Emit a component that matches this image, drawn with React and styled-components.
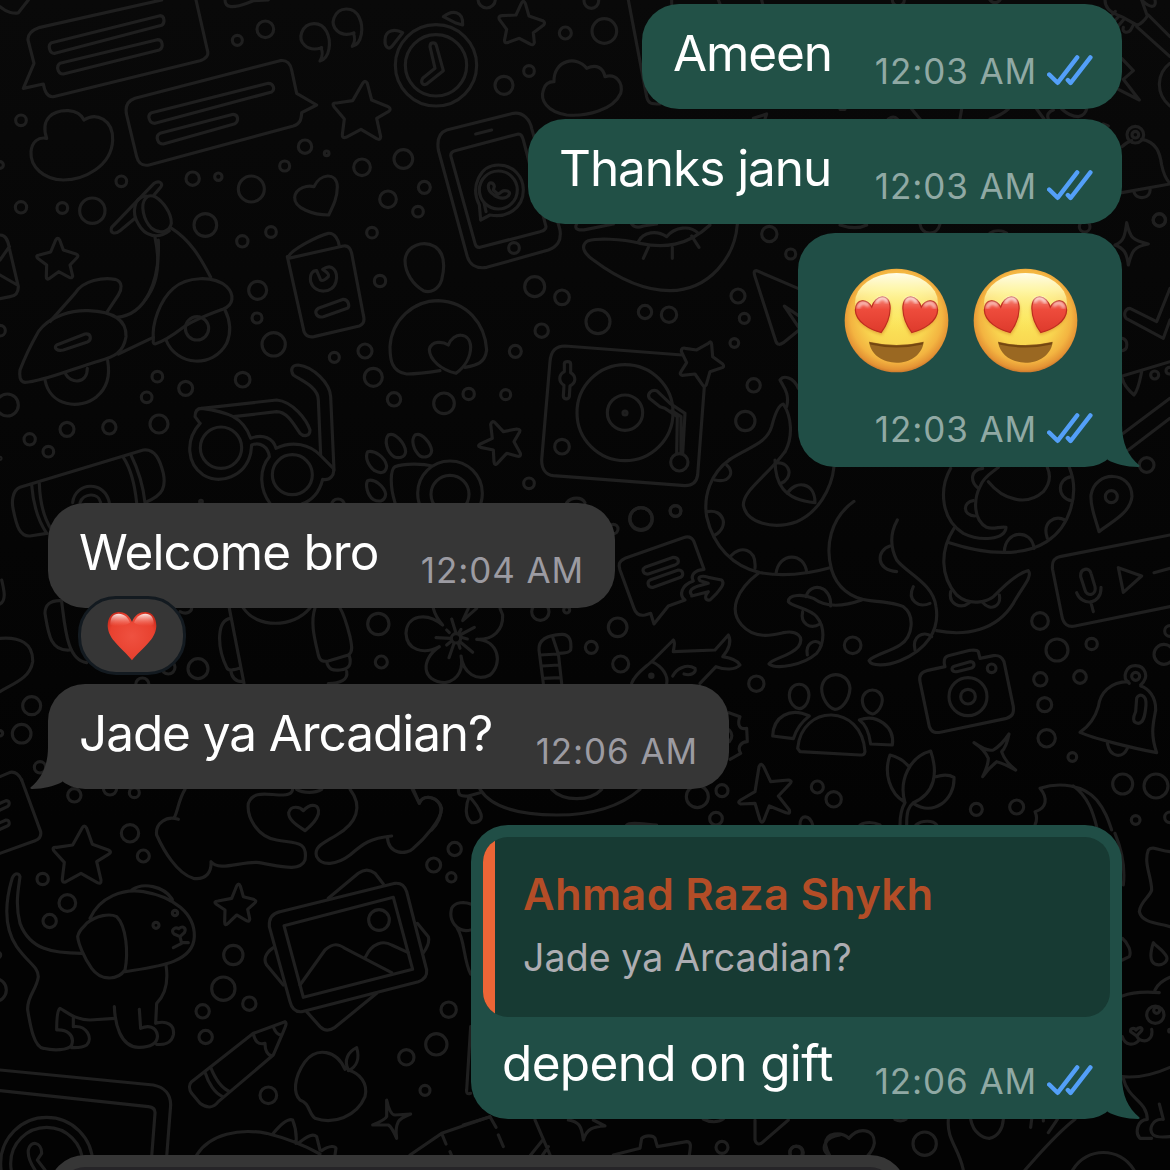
import React from "react";
import styled, { createGlobalStyle } from "styled-components";

const GlobalStyle = createGlobalStyle`
  html, body { margin: 0; padding: 0; background: #050505; }
  * { box-sizing: border-box; }
`;

/* ---------- layout ---------- */

const Screen = styled.main`
  position: relative;
  display: flex;
  flex-direction: column;
  width: 1170px;
  height: 1170px;
  padding: 4px 48px 0;
  overflow: hidden;
  background: linear-gradient(#090909, #030303 70%);
  font-family: Inter, "Liberation Sans", sans-serif;
  color: #fff;
`;

const Doodles = styled.svg`
  position: absolute;
  inset: 0;
  width: 1170px;
  height: 1170px;
  fill: none;
  stroke: #1f1f1f;
  stroke-width: 9.5;
  stroke-linecap: round;
  stroke-linejoin: round;
`;

const Bubble = styled.article`
  position: relative;
  flex: none;
  display: flex;
  flex-direction: column;
  align-self: ${(p) => (p.$mine ? "flex-end" : "flex-start")};
  width: ${(p) => p.$width}px;
  height: ${(p) => p.$height || 105}px;
  margin-top: ${(p) => p.$gap || 0}px;
  border-radius: 37px;
  background: ${(p) => (p.$mine ? p.$tone || "#204e46" : "#363636")};
`;

const Line = styled.div`
  flex: 1;
  display: flex;
  justify-content: space-between;
  padding: ${(p) => p.$top || 19}px 29px 18px 31px;
`;

const Text = styled.p`
  margin: 0;
  font-size: 49.5px;
  line-height: 60px;
  letter-spacing: ${(p) => p.$track || -1}px;
  white-space: nowrap;
`;

const Meta = styled.div`
  display: flex;
  align-items: center;
  align-self: flex-end;
  height: 40px;
  gap: 10px;
  margin-left: auto;
`;

const Time = styled.time`
  font-size: 35px;
  line-height: 40px;
  letter-spacing: 0.9px;
  margin-right: ${(p) => (p.$mine ? 0 : 2)}px;
  white-space: nowrap;
  color: ${(p) => (p.$mine ? "#90a9a4" : "#9c9ba2")};
`;

const Ticks = styled.svg`
  width: 46px;
  height: 31px;
  margin-bottom: 2px;
  fill: none;
  stroke: #539ff8;
  stroke-width: 4.4;
  stroke-linecap: round;
  stroke-linejoin: round;
`;

const TailShape = styled.svg`
  position: absolute;
  bottom: 0;
  ${(p) => (p.$mine ? "right: -18px;" : "left: -18px; transform: scaleX(-1);")}
  width: 54px;
  height: 42px;
  fill: ${(p) => (p.$mine ? "#204e46" : "#363636")};
`;

const EmojiRow = styled.div`
  display: flex;
  gap: 24px;
  padding: 35px 0 0 46px;
`;

const Emoji = styled.svg`
  width: 105px;
  height: 105px;
`;

const Reaction = styled.div`
  position: absolute;
  left: 30px;
  top: 93px;
  display: flex;
  align-items: center;
  justify-content: center;
  width: 108px;
  height: 79px;
  padding-right: 1px;
  border: 3px solid #131a20;
  border-radius: 38px;
  background: #363636;
`;

const HeartIcon = styled.svg`
  width: 50px;
  height: 50px;
`;

const Quote = styled.blockquote`
  flex: none;
  display: flex;
  height: ${(p) => p.$height || 180}px;
  margin: 12px 12px 0;
  border-radius: 25px;
  overflow: hidden;
  background: ${(p) => p.$tone || "#173a33"};
`;

const QuoteBar = styled.span`
  width: 12px;
  background: #ec6536;
`;

const QuoteBody = styled.div`
  padding: 31px 0 0 28px;
  white-space: nowrap;
`;

const QuoteName = styled.div`
  font-size: 43.5px;
  font-weight: 600;
  line-height: 52px;
  letter-spacing: 0.3px;
  color: #b34d27;
`;

const QuoteText = styled.div`
  margin-top: 13px;
  font-size: 37.5px;
  line-height: 50px;
  letter-spacing: 0.1px;
  color: #adadb2;
`;

/* ---------- small drawings ---------- */

const Tail = ({ mine }) => (
  <TailShape $mine={mine} viewBox="0 0 54 42">
    <path d="M36 0C36 18 42 31 53.5 40.5Q54 42 52 42C40 41.8 30 39.5 21.5 34.8V0Z" />
  </TailShape>
);

const Stamp = ({ mine, children }) => (
  <Meta>
    <Time $mine={mine}>{children}</Time>
    {mine && (
      <Ticks viewBox="0 0 46 31">
        <path d="M2.2 19.5L10.6 27.8L30.2 2.4M20.8 25L23.6 28L43.4 2.4" />
      </Ticks>
    )}
  </Meta>
);

const EYE =
  "M276 262C285 226 331 215 331 266C330 296 318 320 304 338C270 329 228 306 227 271C229 235 262 236 276 262Z";

const HeartEyes = ({ id }) => (
  <Emoji viewBox="193 145 314 314">
    <defs>
      <radialGradient id={id + "f"} cx="0.5" cy="0.46" r="0.54">
        <stop offset="0" stopColor="#fbe75c" />
        <stop offset="0.55" stopColor="#f9d650" />
        <stop offset="0.82" stopColor="#f3b441" />
        <stop offset="0.95" stopColor="#e49334" />
        <stop offset="1" stopColor="#cd7a2d" />
      </radialGradient>
      <linearGradient id={id + "t"} x1="0" y1="0" x2="0" y2="1">
        <stop offset="0" stopColor="#fffde9" />
        <stop offset="0.3" stopColor="#fffbb4" stopOpacity="0.85" />
        <stop offset="1" stopColor="#fdea64" stopOpacity="0" />
      </linearGradient>
      <linearGradient id={id + "e"} x1="0" y1="0" x2="0" y2="1">
        <stop offset="0" stopColor="#f58a7c" />
        <stop offset="0.35" stopColor="#ee4c3c" />
        <stop offset="1" stopColor="#de3a2c" />
      </linearGradient>
      <filter id={id + "b"} x="-40%" y="-40%" width="180%" height="180%">
        <feGaussianBlur stdDeviation="5" />
      </filter>
    </defs>
    <circle cx="350" cy="302" r="155" fill={`url(#${id}f)`} />
    <ellipse cx="350" cy="248" rx="124" ry="88" fill={`url(#${id}t)`} />
    {[undefined, "translate(700 0) scale(-1 1)"].map((t, i) => (
      <g key={i} transform={t}>
        <path d={EYE} transform="translate(2 7)" fill="#c9691e" opacity="0.45" filter={`url(#${id}b)`} />
        <path d={EYE} fill={`url(#${id}e)`} stroke="#bd2d1f" strokeWidth="3.5" />
        <path d="M236 262C240 248 256 246 264 256" stroke="#fff" strokeWidth="9" fill="none" strokeLinecap="round" opacity="0.65" filter={`url(#${id}b)`} />
        <path d="M291 247C298 232 316 230 321 244" stroke="#fff" strokeWidth="10" fill="none" strokeLinecap="round" opacity="0.75" filter={`url(#${id}b)`} />
      </g>
    ))}
    <path d="M268 368C266 364 270 365 276 367Q350 384 424 367C430 365 432 364 431 369C424 406 390 428 350 428C310 428 275 406 268 368Z" fill="#9a6822" />
    <path d="M269 367Q350 386 430 367L428 374Q350 392 271 374Z" fill="#673c0c" opacity="0.75" />
  </Emoji>
);

const RedHeart = () => (
  <HeartIcon viewBox="319 93 150 150">
    <defs>
      <radialGradient id="rh" cx="0.5" cy="0.5" r="0.6">
        <stop offset="0" stopColor="#ef5140" />
        <stop offset="0.75" stopColor="#e8412f" />
        <stop offset="1" stopColor="#c8291b" />
      </radialGradient>
      <linearGradient id="rg" x1="0" y1="0" x2="0" y2="1">
        <stop offset="0" stopColor="#fff" stopOpacity="0.9" />
        <stop offset="1" stopColor="#ff8a7a" stopOpacity="0" />
      </linearGradient>
    </defs>
    <path d="M394 126C386 103 368 95 352 96C332 98 321 114 321 138C323 180 362 200 394 241C427 200 465 180 467 138C467 114 456 98 436 96C420 95 402 103 394 126Z" fill="url(#rh)" />
    <path d="M329 134C328 112 338 101 354 101C370 101 382 112 388 128C372 138 345 142 329 134Z" fill="url(#rg)" />
    <path d="M459 134C460 112 450 101 434 101C418 101 406 112 400 128C416 138 443 142 459 134Z" fill="url(#rg)" />
  </HeartIcon>
);

/* ---------- wallpaper: outlines drawn on a 1/3 px grid, one patch per area ---------- */

const PATCHES = [
  {
    x: 0,
    y: 0,
    dots: [[63,361,16],[712,121,15],[796,88,25],[364,544,16],[63,622,17],[187,624,16],[277,632,38],[578,536,20],[655,530,11],[754,567,39],[616,675,34],[915,440,20],[980,460,7],[854,498,15],[1086,502,25],[1164,598,25],[1116,698,16],[813,696,16],[727,724,17],[0,495,10]],
    paths: [
      "M0 20C20 38 45 42 55 38L85 0",
      "M485 0L120 82C95 90 82 105 84 120L102 190L70 265L130 252C135 280 145 292 160 290L600 182C620 176 627 165 622 150L588 0",
      "M155 128L480 47C495 48 495 70 485 76L165 160C148 162 142 135 155 128Z",
      "M180 190L472 119C488 119 492 142 478 150L190 222C172 222 168 198 180 190Z",
      "M405 295L840 182C862 178 872 195 875 210L890 280L950 315L905 338C904 362 898 372 880 378L450 494C425 500 415 490 410 470L380 345C374 318 385 302 405 295Z",
      "M455 338L805 250C822 250 825 270 815 276L465 370C447 370 440 345 455 338Z",
      "M480 400L700 343C716 344 716 364 705 371L490 432C472 432 465 408 480 400Z",
      "M140 415C120 355 160 330 205 332C230 334 245 345 252 360C290 335 340 360 338 420C335 500 250 540 190 540C130 538 90 500 93 455C96 425 115 410 140 415Z",
      "M965 143C920 158 895 125 905 98C920 60 965 65 980 95C995 125 990 175 960 183C970 165 968 155 963 143",
      "M1062 99C1017 114 992 81 1002 54C1017 16 1062 21 1077 51C1092 81 1087 131 1057 139C1067 121 1065 111 1060 99",
      "M1088 250Q1095 238 1102 250L1115 300L1165 320Q1176 328 1165 335L1130 355L1142 410Q1142 422 1130 416L1083 388L1038 412Q1026 416 1027 403L1033 357L1002 320Q994 308 1010 309L1058 302Z",
      "M942 560C960 520 1010 515 1012 560C1012 595 998 620 986 645C940 645 882 625 884 592C887 562 925 555 942 560Z",
      "M167 720Q173 710 179 720L190 750L228 762Q238 766 230 774L210 795L218 828Q217 836 208 832L176 815L147 836Q139 840 139 830L140 795L113 775Q106 766 118 765L152 756Z",
      "M405 655L360 692C345 704 328 700 335 682L462 550C478 540 490 550 483 560L462 585",
      "M437 595C420 615 430 660 455 685C480 705 510 695 514 670C515 640 490 605 465 590C452 585 442 588 437 595Z",
      "M440 588C400 590 395 640 415 672C435 710 475 718 508 692",
      "M465 712C480 780 475 850 435 900M515 685C570 720 600 770 632 832",
      "M675 0C675 25 700 25 745 8L760 2L805 0",
      "M865 772C870 750 960 705 985 700C1005 698 1015 720 1018 738",
      "M0 705C20 705 25 725 28 745L55 860C55 880 45 888 30 890L0 896M28 740L0 780M0 825L52 855",
    ],
  },
  {
    x: 0,
    y: 240,
    dots: [[773,151,27],[771,234,15],[821,313,35],[1095,333,21],[1003,352,15],[1120,412,27],[1140,123,17],[472,410,16],[557,445,21],[440,472,16],[728,419,22],[22,495,33],[201,568,21],[89,598,17],[328,562,20],[145,635,16],[477,552,27],[0,272,16],[1182,478,20],[603,785,4],[1014,797,20],[591,265,35],[663,623,62],[877,704,60],[0,655,3]],
    paths: [
      "M862 50L912 275C918 290 930 292 942 290L1078 258C1092 253 1094 240 1090 225L1055 40C1050 18 1040 16 1030 18L865 55",
      "M968 88C998 68 1015 95 1008 125C1000 160 945 165 932 125C928 100 940 90 950 92L962 120Q968 126 985 110Q990 102 968 88Z",
      "M955 205L1030 178C1046 178 1050 200 1042 205L970 230C950 235 940 215 955 205Z",
      "M150 245L225 160C250 120 310 112 345 118C370 125 365 150 355 165L322 215",
      "M60 390C75 350 95 310 115 275C150 225 220 210 265 212C340 215 380 240 378 290C370 340 340 350 300 362C220 385 130 425 75 427C58 425 58 405 60 390Z",
      "M170 315L255 282C275 280 275 300 262 306L190 330C170 335 160 322 170 315Z",
      "M135 420C150 500 240 510 290 470C325 440 330 400 323 362M197 402C210 430 262 435 262 385",
      "M475 0C480 120 440 225 350 232",
      "M460 300C455 250 480 180 520 145C560 110 640 105 680 140C705 165 700 195 670 207C620 225 580 240 550 262C520 285 490 305 465 312Q458 312 460 300Z",
      "M498 300C530 380 640 385 680 310C695 275 690 240 675 210M355 342L460 292",
      "M605 505L830 480C880 485 920 540 930 570C930 590 910 590 900 580C880 550 860 515 830 515L700 530",
      "M600 550C555 600 560 670 610 705C660 735 735 710 752 640L755 615C780 605 805 620 808 650C775 690 780 750 810 790",
      "M600 550L585 530C585 510 595 505 605 505C680 515 730 530 752 595C790 580 820 595 828 625C880 600 930 615 960 645L1000 685C1005 705 990 722 968 718C960 750 940 780 905 792",
      "M962 645L955 480C955 440 900 420 880 405C870 390 875 375 895 375C940 380 990 430 992 470L1002 690",
      "M140 880L90 888C60 890 50 860 40 810C35 790 35 752 60 742L430 630C465 625 480 660 490 700C498 740 490 765 440 785",
      "M95 735C100 800 120 850 140 880M118 730C120 790 135 840 155 870M370 652C395 690 405 740 410 788M393 645C415 690 430 740 435 788",
      "M218 788C225 725 315 720 328 788M240 788C250 760 295 755 302 788",
    ],
  },
  {
    x: 380,
    y: 0,
    dots: [[168,196,122],[168,196,92],[320,-2,26],[634,3,22],[556,99,18],[673,93,37],[447,213,16],[372,256,27],[70,477,28],[133,562,18],[114,635,16],[1168,702,23],[402,744,16],[355,570,57]],
    paths: [
      "M15 120C15 90 45 85 68 98L35 140C25 150 14 140 15 120Z",
      "M190 50C215 30 250 30 248 75L225 68Z",
      "M150 140C150 125 168 125 170 140L190 212L140 252C125 258 122 245 128 235L165 205Z",
      "M424 10Q430 -2 436 10L447 48L488 62Q498 68 490 76L460 98L463 128Q460 138 450 132L418 115L382 128Q372 130 374 118L380 88L358 58Q354 48 366 47L408 45Z",
      "M522 245C520 180 590 165 620 205C650 190 670 205 675 230C710 220 730 250 722 280C700 330 620 350 560 345C500 335 480 300 490 270C495 250 508 245 522 245Z",
      "M200 390L400 340C430 335 450 360 455 385L540 690C545 725 530 740 505 750L320 802C285 808 268 790 262 770L175 450C170 415 180 397 200 390Z",
      "M225 452L415 402C425 402 427 410 430 420L498 680C498 690 490 692 480 695L300 742C290 744 287 738 285 730L213 470Q210 456 225 452Z",
      "M287 402L335 390",
      "M302 660L298 615C270 560 300 495 355 495C400 495 430 530 430 570C430 625 380 655 330 645ZM318 635L312 608",
      "M325 560C325 542 342 548 343 560L340 570L355 583L365 575C375 568 392 575 388 582C380 600 355 596 342 585C330 577 325 570 325 560Z",
      "M745 0L800 290C805 312 815 312 840 312M875 0V12M1015 0L1020 12M1145 0L1148 12",
      "M1120 355L1160 342L1155 357M590 672C580 690 600 692 620 688L700 672M755 672C765 685 780 682 790 678L830 672",
      "M775 725C790 695 830 690 860 710C885 680 930 675 955 700",
      "M780 730C850 745 920 740 990 675M805 742L790 775M877 742V775M935 708L957 742",
      "M780 730C720 715 650 715 625 722C600 735 610 760 640 780C720 840 800 872 870 872C990 870 1065 770 1072 672",
      "M75 780C80 735 130 720 165 740C195 760 195 800 185 840C175 870 150 880 130 872C100 855 75 820 75 780Z",
    ],
  },
  {
    x: 370,
    y: 230,
    dots: [[494,170,30],[576,202,22],[515,302,20],[684,275,36],[825,246,20],[897,254,23],[436,364,18],[222,520,31],[296,492,17],[407,494,15],[477,760,16],[813,866,33],[916,843,16],[1104,198,21],[1123,265,15],[1093,339,13],[1151,466,20],[1126,573,29],[1262,72,15],[765,548,144],[765,548,53],[765,549,6],[576,650,22],[928,697,26],[240,790,97],[240,793,57]],
    paths: [
      "M210 422C160 430 130 432 110 432C65 425 60 390 60 350C65 270 130 212 205 212C290 215 345 280 350 360C345 400 320 405 285 412",
      "M235 345C250 305 300 305 302 350C302 380 285 410 258 430C215 420 178 390 178 358C185 330 220 335 235 345Z",
      "M362 583Q367 568 377 580L400 605L440 597Q455 597 447 609L432 635L451 670Q454 682 440 678L410 670L382 700Q374 708 372 696L370 660L332 652Q320 648 331 642L367 625Z",
      "M937 375L585 348C555 348 542 365 540 395L515 690C515 720 530 735 550 737L945 767C970 767 980 755 983 735L1003 470",
      "M920 670L922 560L885 535L870 530L838 505C830 490 845 478 860 482L900 520L945 550L938 672M933 670L933 560L905 542",
      "M583 400C585 393 602 393 602 402L602 428C620 440 618 458 600 468L598 500C595 510 580 508 580 498L582 466C565 455 565 435 583 425Z",
      "M1015 340Q1024 330 1025 343L1028 380L1058 402Q1066 412 1053 414L1020 425L1009 464Q1003 474 997 464L975 432L937 436Q927 434 933 425L950 398L934 364Q934 352 946 355L980 360Z",
      "M75 818C60 770 60 720 75 710C100 700 160 700 185 708M590 818C605 800 635 800 645 818",
      "M1284 175L1160 122C1150 122 1152 130 1155 140L1218 335C1222 345 1230 345 1240 338L1290 298L1243 228L1290 260",
      "M1080 688C1140 650 1190 640 1205 590C1215 550 1225 525 1240 522C1265 560 1270 620 1245 665",
      "M1250 530C1260 490 1240 470 1230 450C1240 435 1270 440 1285 475",
      "M55 615C75 605 105 640 107 665C105 685 85 685 72 680C50 665 42 630 55 615Z",
      "M135 615C155 605 183 640 185 662C183 682 163 684 150 678C130 660 122 630 135 615Z",
      "M-7 665C13 660 45 680 50 708C48 730 32 732 14 722C-8 705 -15 680 -7 665Z",
      "M-7 752C13 745 42 768 47 792C45 815 27 817 9 808C-8 795 -15 765 -7 752Z",
    ],
  },
  {
    x: 700,
    y: 440,
    dots: [[1340,75,22],[1234,170,18],[1020,543,25],[1071,630,33],[1175,612,17],[1021,718,20],[1140,711,19],[1034,794,21],[1040,895,26],[1117,951,13],[1392,643,30],[1410,573,16],[1268,1032,30],[1368,1038,36],[1307,1140,13],[829,1108,18],[950,1101,21],[458,616,25],[169,731,23],[352,1041,18],[401,1078,23],[66,1052,18],[48,1136,19],[1410,1132,16],[875,685,13],[804,770,57],[804,770,22],[1307,709,12]],
    paths: [
      "M90 58C30 100 10 170 20 230C40 320 100 380 180 398C250 410 330 400 390 383",
      "M255 35C200 110 130 150 130 195C140 250 220 270 290 245C350 220 395 150 402 80",
      "M225 60C225 130 250 180 345 188M230 68C275 68 280 115 240 132M262 160C285 120 345 125 345 188M80 75C105 95 90 130 45 120M22 215C70 205 90 260 45 285M92 348C120 315 170 325 165 385M228 402C235 335 315 335 320 398",
      "M462 184C390 235 375 320 395 390C410 440 450 475 510 482C560 487 590 490 610 500C645 525 640 590 600 615C570 635 520 645 507 662C515 680 560 678 600 662C680 630 720 570 708 500C700 430 620 400 590 360C570 320 570 280 592 240",
      "M175 400C110 450 85 510 125 555C165 600 220 585 250 578C290 570 315 590 295 620C270 650 215 655 207 672C230 690 310 675 350 640C375 610 375 560 350 530C330 505 275 500 265 485C265 462 310 462 340 475C380 505 430 500 485 480",
      "M318 470C330 425 395 435 392 498M308 515C300 550 330 570 360 552M322 645C315 610 345 595 362 612M570 318C530 330 525 390 590 395M640 440C620 480 655 505 690 490M645 630C635 590 670 570 695 590",
      "M752 85C715 150 725 240 790 280C840 305 915 300 918 262C900 258 880 270 860 262C820 240 820 180 840 140C850 110 880 95 895 82M865 125C910 180 980 200 1030 155C1055 125 1050 100 1042 82",
      "M1108 82C1140 160 1110 260 1040 305C970 350 860 345 748 308M762 265C720 330 720 410 770 465C810 500 860 485 880 470C910 440 950 400 985 392C1000 410 960 450 940 490C890 570 800 590 710 572",
      "M848 85C810 90 810 125 835 145M820 182C790 185 785 225 825 228M1115 110C1070 115 1070 175 1115 182M1042 295C1025 245 1065 225 1095 240M913 335C915 270 995 265 1002 325M752 455C745 490 780 510 808 488M848 487C870 515 905 500 898 465",
      "M1197 275C1185 230 1170 200 1173 165C1185 90 1295 90 1296 170C1290 220 1235 245 1197 275Z",
      "M1410 285L1080 350C1058 355 1055 370 1058 390L1085 525C1090 555 1105 562 1125 558L1410 500",
      "M1142 410C1140 385 1168 380 1173 400L1185 440C1190 468 1160 470 1155 450ZM1130 458C1145 500 1205 495 1203 442M1172 485L1180 515M1255 383L1325 408L1270 457ZM1362 398L1410 385",
      "M365 745C370 690 445 690 450 745C448 780 425 808 405 808C385 805 365 775 365 745ZM268 765C270 722 325 722 327 765C325 795 308 806 297 806C285 804 268 790 268 765ZM487 780C490 740 545 740 547 780C545 808 525 822 517 822C505 820 487 805 487 780Z",
      "M293 925C305 790 485 790 495 935C493 945 488 945 480 945L300 935ZM328 828C270 800 220 830 218 888L280 896C290 865 305 845 328 828ZM478 840C530 820 585 860 577 915L512 912C508 880 500 855 478 840Z",
      "M735 680L680 692C660 697 657 710 660 725L688 860C695 878 705 880 725 876L920 835C938 828 942 820 940 800L912 665C905 648 895 645 880 647L840 655L835 635C830 628 820 630 810 631L745 647C732 650 730 665 735 680Z",
      "M765 678L810 665C825 665 825 680 815 684L770 695C755 697 750 682 765 678Z",
      "M822 908Q860 935 880 930Q905 915 927 882Q920 920 905 935Q915 965 947 990Q910 970 890 965Q865 985 848 1010Q865 975 865 955Q855 930 822 908Z",
      "M1288 730C1262 712 1280 676 1307 677C1335 678 1350 710 1322 735M1285 725C1230 725 1200 760 1195 800C1185 835 1165 860 1140 877C1180 895 1300 925 1370 938C1350 880 1360 850 1367 810C1368 770 1345 745 1322 738",
      "M1310 775C1315 760 1340 760 1338 795C1335 830 1330 850 1315 850C1295 848 1300 830 1307 815ZM1222 910C1230 955 1270 955 1282 925",
      "M612 1085C570 1060 550 1000 570 945C590 950 610 960 625 978M615 1088C595 1020 630 950 692 933C715 1000 705 1060 640 1088M708 1010C730 1003 750 1005 762 1012C765 1080 700 1130 640 1090M600 1155C600 1120 605 1105 615 1088M620 1155C620 1115 625 1100 640 1088M648 1155C665 1140 700 1140 710 1155M480 1155C495 1145 520 1145 540 1155",
      "M177 980Q183 966 191 980L212 1025L265 1020Q280 1022 268 1033L235 1068L268 1110Q272 1124 258 1118L208 1098L191 1142Q185 1152 180 1140L165 1090L122 1092Q110 1088 122 1080L165 1055Z",
      "M300 1155C300 1120 330 1125 338 1155",
      "M1020 1045C1080 1025 1150 1035 1190 1080C1215 1110 1225 1140 1235 1170M1120 1038C1165 1070 1180 1120 1190 1160M1020 1045C1045 1075 1040 1105 1005 1115C1012 1130 1010 1145 1005 1155",
      "M87 818L120 830C110 855 120 870 140 865L142 905C125 905 110 920 122 940L90 958M88 870C98 880 98 895 88 905",
    ],
  },
  {
    x: 380,
    y: 500,
    dots: [[783,57,34],[887,33,16],[700,87,14],[713,382,28],[634,442,18],[722,492,24],[481,335,26],[560,330,9],[952,890,33],[814,527,5],[228,415,14]],
    paths: [
      "M972 208L942 125C935 110 925 108 910 113L735 175C715 185 715 195 720 210L762 325C768 342 780 348 795 345L812 340L822 372L865 318L915 300C895 285 905 255 940 243C930 225 945 210 972 208",
      "M935 285C925 272 935 265 955 258L985 250L960 242C950 230 965 225 985 232L1025 240C1035 250 1025 262 1010 280L990 300C975 302 972 290 985 275L935 288",
      "M795 202L880 172C897 172 900 188 887 194L805 222C788 224 785 207 795 202ZM810 240L895 210C910 210 912 225 902 232L820 262C803 264 800 246 810 240Z",
      "M755 550C765 520 800 500 820 480L880 420C888 430 880 445 880 455L1005 450L1045 405C1055 425 1045 450 1028 470C1060 475 1075 485 1080 495C1065 510 1035 510 1008 500L960 550M815 485C850 500 865 530 860 552M878 528C890 505 920 490 945 505C950 520 930 528 912 522",
      "M160 325C165 345 175 360 188 375C140 335 80 345 78 400C80 450 130 465 178 440C120 480 125 545 195 548C240 540 250 500 243 468C250 520 290 545 330 525C370 490 355 420 290 418C340 420 370 390 368 345L360 325M265 325L248 362L290 325",
      "M228 400L215 357M240 405L283 382M168 413L212 415M240 425L278 457M222 430L207 473M243 412L262 417M208 398L200 390M235 430L240 445M212 425L200 435M237 398L243 388",
      "M490 550L477 450C475 420 500 405 545 403C570 402 575 425 572 450C565 462 550 458 535 460L545 550M480 465L535 462L517 408M487 498L538 495M490 535L540 533",
      "M97 868L118 910C125 885 165 885 180 915C190 945 170 975 155 990M235 868C235 885 240 890 265 888L300 878M268 888C255 920 255 955 275 968C300 970 310 955 300 935C290 910 275 900 268 888M300 868C340 930 440 945 530 945C640 945 720 920 780 868M515 868C550 905 630 905 665 868M740 975C750 965 790 972 830 975",
    ],
  },
  {
    x: 0,
    y: 580,
    dots: [[95,377,27],[65,461,28],[0,460,8],[120,562,17],[594,266,30],[505,262,20],[427,314,20],[1135,132,32],[1144,246,18]],
    paths: [
      "M0 72C20 60 12 30 5 0M185 62C150 60 135 75 135 100C145 160 150 215 210 210M185 65C195 140 200 240 260 248M0 175C60 170 100 190 98 245C90 295 40 310 0 335M540 95C560 105 575 95 575 84",
      "M688 85L732 310M692 115C650 120 650 200 680 262C685 275 700 270 718 265M692 270C695 295 710 305 728 305M730 84C770 145 880 145 930 84",
      "M945 84C930 130 945 180 955 225C960 245 970 245 985 243L1045 225C1060 215 1055 195 1050 170C1040 130 1030 100 1020 84M980 245C985 270 1000 272 1020 270C1050 268 1055 250 1048 228M1040 275C1045 300 1020 310 985 311",
      "M0 590L30 577C50 573 60 590 65 600",
    ],
  },
  {
    x: 0,
    y: 780,
    dots: [[223,46,20],[330,25,20],[403,38,15],[390,160,26],[430,228,18],[128,297,17],[202,369,25],[149,423,20],[700,525,29],[670,626,35],[748,671,20],[608,694,20],[617,771,20],[805,946,25],[1364,207,20],[1301,255,21],[1354,292,14],[1346,689,23],[1309,793,32],[1219,832,23],[1275,931,15],[-15,630,34],[-6,525,8],[468,436,9],[525,399,8],[1137,420,31],[140,1150,138],[140,1150,108]],
    paths: [
      "M65 0L122 155C124 168 118 178 105 182L0 220M0 70L18 62C30 62 30 75 22 80L0 90M0 128L18 120C30 120 30 135 22 138L0 148",
      "M246 145Q253 132 260 145L277 193L325 210Q338 216 325 223L290 245L303 300Q304 314 292 308L243 280L198 305Q185 310 187 296L193 247L162 213Q154 200 170 202L218 195Z",
      "M710 318Q716 306 721 318L730 350L760 358Q773 362 763 370L743 388L749 416Q750 428 738 421L710 405L684 430Q674 440 674 425L675 390L648 372Q640 364 654 363L695 355Z",
      "M555 28C535 60 535 90 522 115M535 118C500 105 465 130 470 165C490 210 530 280 580 295C620 300 635 275 633 245C655 275 720 245 770 247C830 255 900 280 915 240C925 180 880 190 830 180C770 170 740 110 745 70C760 30 800 45 850 45C875 42 877 35 878 28M890 28C910 40 945 40 965 28",
      "M1050 28C1090 80 1070 130 1010 165C970 190 940 200 950 230C965 260 1010 255 1050 225C1090 190 1110 175 1175 168M1162 170C1165 225 1220 225 1240 205C1270 180 1325 120 1325 85C1315 50 1270 40 1258 70L1240 28",
      "M910 92C935 65 960 75 955 102C950 120 930 140 915 152C890 135 865 120 866 98C872 75 900 80 910 92Z",
      "M245 520C160 520 90 510 60 430C45 370 55 330 60 290C55 275 40 280 35 300C15 370 10 440 50 500C85 550 115 560 115 590C110 630 80 650 83 690C90 730 100 800 130 805C160 812 205 812 215 795C225 765 200 748 170 750C170 720 172 690 180 685C200 695 220 718 270 720L345 715",
      "M220 712L220 740C260 735 280 775 260 795C245 805 225 803 215 803M343 680C345 730 360 800 415 802C450 803 475 790 472 765C468 740 445 735 422 745L418 688M498 555C505 600 500 640 470 670L467 730C500 720 525 735 520 765C515 790 490 795 470 793",
      "M270 415C300 350 370 325 430 335C520 350 585 400 583 470C580 550 470 560 375 575M260 430C290 405 330 400 350 410C380 440 385 520 375 570C350 605 300 600 275 565C250 530 235 490 233 470C238 445 255 440 260 430M395 330C430 305 490 320 515 355C520 362 515 365 510 362",
      "M536 446C550 435 560 445 553 458L540 470L522 462C510 450 525 440 536 446M540 470L545 490L520 503M545 488L565 488",
      "M840 395L1185 310C1205 308 1215 320 1220 335L1280 570C1282 590 1270 600 1255 605L905 695C885 697 875 685 870 665L808 440C806 415 818 400 840 395ZM852 437L1180 352L1238 568L910 652Z",
      "M900 615L975 510C1000 488 1015 492 1035 505L1175 578M1097 530C1115 490 1150 480 1175 495L1225 518M985 355L1075 280C1095 265 1110 268 1125 280L1150 312M1252 430L1285 470C1290 490 1280 505 1270 518M820 503C795 520 790 540 800 555L850 615M920 695L960 740C975 755 990 752 1005 742L1130 640",
      "M575 905L760 760L855 725C862 728 856 740 850 755L820 825L655 965C640 985 620 985 600 970L575 940C565 925 568 912 575 905ZM760 760C765 785 775 795 795 790C795 815 805 825 815 828M820 740C825 755 835 765 845 765M632 862C645 895 665 925 690 935M615 877C625 910 645 940 668 950",
      "M1035 868C1010 810 950 800 915 845C880 895 880 940 900 960C930 970 925 1000 945 1015C1000 1035 1070 1010 1095 950C1105 910 1080 880 1045 870C1030 840 1045 815 1070 803C1080 835 1070 860 1045 872",
      "M1160 960Q1170 1005 1185 1005L1232 1002Q1200 1015 1195 1025Q1185 1045 1190 1075Q1175 1040 1165 1035L1118 1035Q1155 1020 1160 1010Z",
      "M0 870L460 915C495 922 512 945 512 975L500 1130M0 932L445 980C462 982 466 990 465 1000L455 1130M135 1170L112 1140L125 1120C125 1085 90 1080 85 1110C82 1135 95 1155 105 1170",
      "M590 1125C630 1060 720 1045 800 1060C860 1075 920 1100 960 1122M820 1060C845 1030 865 1015 878 1020C890 1050 890 1070 888 1090M895 1090C925 1065 940 1060 950 1070L960 1110M965 1112C990 1095 1005 1098 1008 1105L1005 1125",
      "M1230 1125L1325 1060L1470 1010M1325 1060L1338 1092M1350 1115L1356 1129M1412 450C1370 460 1345 420 1355 385C1365 365 1395 365 1412 372M1372 445C1395 480 1390 540 1412 582M1412 740L1400 930Q1398 945 1412 940",
    ],
  },
  {
    x: 440,
    y: 800,
    dots: [[846,1042,18],[1070,1058,20]],
    paths: [
      "M70 975L150 950L168 982M175 1005L190 1040M285 960L330 1065M310 1018L272 1065M325 1040L308 1065M385 960C415 965 425 975 430 1020C440 985 460 980 495 978L460 960M945 960L945 1020C950 1035 960 1035 970 1025L1045 960",
      "M520 1065L600 1045L605 1015C615 1005 640 1005 645 1015L652 1040L740 1025C755 1025 752 1040 748 1065M1200 1005C1155 1010 1140 1045 1165 1065M790 957C810 968 835 968 850 957",
    ],
  },
  {
    x: 780,
    y: 780,
    dots: [[1126,704,26],[1130,691,9],[1170,752,4],[434,1091,35],[48,1118,19]],
    paths: [
      "M1005 160C1030 220 1035 270 1030 315M1170 215C1140 215 1120 195 1105 210C1090 250 1115 290 1115 330C1110 350 1080 365 1078 395C1085 430 1140 430 1170 440M1027 475C1045 490 1055 515 1048 530L1027 540M1120 488C1110 520 1110 545 1125 552C1145 560 1165 545 1160 530C1150 510 1130 500 1120 488Z",
      "M1027 648C1060 635 1100 635 1138 638M1125 630C1135 610 1150 600 1170 592M1068 750C1075 740 1090 740 1085 752L1070 768L1052 755C1050 745 1062 742 1068 750M1070 768L1078 780C1060 800 1035 795 1027 770M1078 778C1100 790 1120 775 1115 748M1027 890C1080 895 1130 880 1170 862",
      "M1030 895C1045 960 1100 960 1102 1018C1070 1020 1065 1060 1080 1075L1115 1075M1138 972L1150 1018C1115 1015 1105 1050 1120 1065C1135 1075 1155 1070 1170 1070",
      "M150 1128C145 1120 140 1110 137 1095C135 1055 185 1055 207 1075C235 1040 285 1045 283 1090C280 1110 270 1120 262 1128M505 1018C500 1080 535 1100 550 1170M572 1018C580 1060 610 1075 628 1075C655 1070 668 1045 670 1018M755 1018L752 1042M790 1018V1023M832 1018L805 1058M885 1018C830 1060 780 1120 735 1170M878 1170C920 1100 1020 1100 1062 1170M345 1018C355 1024 370 1024 378 1018",
    ],
  },
  {
    x: 840,
    y: 0,
    dots: [[886,404,25],[886,404,10],[958,660,19],[734,680,16],[175,0,18],[465,-10,18]],
    paths: [
      "M795 0C795 20 805 35 845 50L890 75C900 75 915 60 922 48L905 0M812 48L826 34M824 62L838 48M836 76L850 60M850 82C845 100 865 100 872 90L880 75M905 0C935 30 950 20 945 0M925 45L990 110M890 80L990 170M990 190C950 220 945 280 990 318",
      "M845 175L880 212L850 238L898 300L835 268M790 372L805 378M846 440C855 430 865 425 875 422M905 418C950 425 960 460 965 495C970 520 975 535 990 550M846 578L990 552M882 575C885 600 935 600 930 565",
      "M215 327L240 357M365 327L360 357M505 327C485 345 465 352 450 357M590 327L612 357M625 357C620 345 625 335 640 330M665 327C685 345 700 350 715 350C730 348 738 335 740 327M0 328H15M145 357C155 350 165 350 172 357M240 672C245 708 292 708 300 672M450 699C465 690 485 690 500 699M0 675C30 685 60 685 80 675",
    ],
  },
  {
    x: 780,
    y: 220,
    dots: [[1124,465,12],[1168,452,10],[1138,0,18]],
    paths: [
      "M1040 8C1050 55 1060 62 1105 72C1060 80 1055 95 1045 135C1040 95 1030 85 1005 75C1030 65 1035 50 1040 8Z",
      "M1170 205L1130 305L1050 265C1035 265 1030 285 1038 295L1150 355L1170 300M1027 355C1045 360 1045 390 1027 392M1027 468L1170 425M1085 455C1080 480 1075 510 1062 525C1045 510 1030 490 1027 475M1030 640L1170 535M1045 690L1170 595",
    ],
  },
];

const Wallpaper = () => (
  <Doodles viewBox="0 0 1170 1170" aria-hidden="true">
    {PATCHES.map((p, i) => (
      <g key={i} transform={`translate(${p.x} ${p.y}) scale(0.33333)`}>
        {p.dots.map(([cx, cy, r], k) => (
          <circle key={k} cx={cx} cy={cy} r={r} />
        ))}
        {p.paths.map((d, k) => (
          <path key={k} d={d} />
        ))}
      </g>
    ))}
  </Doodles>
);

export default function App() {
  return (
    <>
      <GlobalStyle />
      <Screen>
        <Wallpaper />

        <Bubble $mine $width={480} $tone="#225147">
          <Line>
            <Text $track={-1.1}>Ameen</Text>
            <Stamp mine>12:03 AM</Stamp>
          </Line>
        </Bubble>

        <Bubble $mine $width={594} $gap={10} $tone="#215046">
          <Line>
            <Text $track={-1.05}>Thanks janu</Text>
            <Stamp mine>12:03 AM</Stamp>
          </Line>
        </Bubble>

        <Bubble $mine $width={324} $height={234} $gap={9}>
          <EmojiRow>
            <HeartEyes id="a" />
            <HeartEyes id="b" />
          </EmojiRow>
          <Line>
            <Stamp mine>12:03 AM</Stamp>
          </Line>
          <Tail mine />
        </Bubble>

        <Bubble $width={567} $gap={36}>
          <Line>
            <Text $track={-0.85}>Welcome bro</Text>
            <Stamp>12:04 AM</Stamp>
          </Line>
          <Reaction>
            <RedHeart />
          </Reaction>
        </Bubble>

        <Bubble $width={681} $gap={76}>
          <Line>
            <Text $track={-1.08}>Jade ya Arcadian?</Text>
            <Stamp>12:06 AM</Stamp>
          </Line>
          <Tail />
        </Bubble>

        <Bubble $mine $width={651} $height={294} $gap={36}>
          <Quote>
            <QuoteBar />
            <QuoteBody>
              <QuoteName>Ahmad Raza Shykh</QuoteName>
              <QuoteText>Jade ya Arcadian?</QuoteText>
            </QuoteBody>
          </Quote>
          <Line $top={16}>
            <Text $track={-0.65}>depend on gift</Text>
            <Stamp mine>12:06 AM</Stamp>
          </Line>
          <Tail mine />
        </Bubble>

        <Bubble $width={859} $gap={36}>
          <Quote $height={80} $tone="#262528" />
        </Bubble>
      </Screen>
    </>
  );
}
